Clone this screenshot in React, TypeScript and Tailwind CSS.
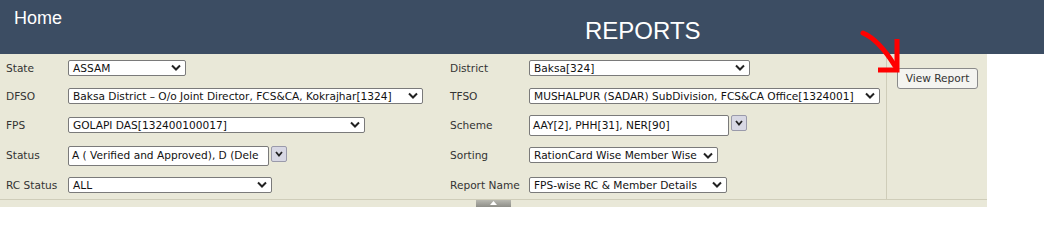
import React from 'react'

const font = { fontFamily: '"DejaVu Sans", Verdana, sans-serif' }
const arial = { fontFamily: '"Liberation Sans", Arial, sans-serif' }

function Chevron() {
    return (
        <svg width="10" height="7" viewBox="0 0 10 7" className="shrink-0">
            <path d="M1 1.5 L5 5.5 L9 1.5" fill="none" stroke="#222" strokeWidth="2" />
        </svg>
    )
}

function Select({ text, w }: { text: string; w: string }) {
    return (
        <div className={`${w} h-[16px] flex items-center justify-between bg-white border border-[#7a7a7a] rounded-[2px] pl-[4px] pr-[4px] text-[10.6px] text-[#111] leading-none overflow-hidden whitespace-nowrap`}>
            <span>{text}</span>
            <Chevron />
        </div>
    )
}

function Multi({ text, w, h }: { text: string; w: string; h: string }) {
    return (
        <div className="flex items-start gap-[2px]">
            <div className={`${w} ${h} flex items-center bg-white border border-[#7a7a7a] rounded-[2px] pl-[3px] text-[10.6px] text-[#111] leading-none overflow-hidden whitespace-nowrap`}>
                {text}
            </div>
            <div className="w-[16px] h-[16px] flex items-center justify-center bg-[#d8d8e4] border border-[#9a9aaa] rounded-[2px]">
                <svg width="8" height="6" viewBox="0 0 8 6">
                    <path d="M1 1 L4 4.5 L7 1" fill="none" stroke="#222" strokeWidth="1.8" />
                </svg>
            </div>
        </div>
    )
}

function Label({ children, w }: { children: React.ReactNode; w: string }) {
    return <div className={`${w} shrink-0 pt-[1px] text-[10.6px] text-[#333]`}>{children}</div>
}

export default function App() {
    return (
        <div className="w-[1044px] h-[252px] bg-white relative overflow-hidden" style={font}>
            <div className="h-[54px] bg-[#3c4d63] flex items-start">
                <div className="w-[585px] pl-[14px] pt-[7px] text-white text-[18px] leading-tight" style={arial}>Home</div>
                <div className="pt-[16px] text-white text-[24px] leading-tight" style={arial}>REPORTS</div>
            </div>
            <div className="w-[987px] bg-[#e9e8d8]">
                <div className="flex border-b border-[#cfcdb9]">
                    <div className="w-[886px] flex flex-col">
                        <div className="h-[28px] flex items-center">
                            <div className="w-[444px] flex items-center pl-[6px]">
                                <Label w="w-[62px]">State</Label>
                                <Select text="ASSAM" w="w-[118px]" />
                            </div>
                            <div className="flex items-center pl-[6px]">
                                <Label w="w-[79px]">District</Label>
                                <Select text="Baksa[324]" w="w-[221px]" />
                            </div>
                        </div>
                        <div className="h-[28px] flex items-center">
                            <div className="w-[444px] flex items-center pl-[6px]">
                                <Label w="w-[62px]">DFSO</Label>
                                <Select text="Baksa District – O/o Joint Director, FCS&CA, Kokrajhar[1324]" w="w-[355px]" />
                            </div>
                            <div className="flex items-center pl-[6px]">
                                <Label w="w-[79px]">TFSO</Label>
                                <Select text="MUSHALPUR (SADAR) SubDivision, FCS&CA Office[1324001]" w="w-[351px]" />
                            </div>
                        </div>
                        <div className="h-[30px] flex items-center">
                            <div className="w-[444px] flex items-center pl-[6px]">
                                <Label w="w-[62px]">FPS</Label>
                                <Select text="GOLAPI DAS[132400100017]" w="w-[297px]" />
                            </div>
                            <div className="flex items-center pl-[6px]">
                                <Label w="w-[79px]">Scheme</Label>
                                <Multi text="AAY[2], PHH[31], NER[90]" w="w-[200px]" h="h-[21px]" />
                            </div>
                        </div>
                        <div className="h-[31px] flex items-center">
                            <div className="w-[444px] flex items-center pl-[6px]">
                                <Label w="w-[62px]">Status</Label>
                                <Multi text="A ( Verified and Approved), D (Dele" w="w-[201px]" h="h-[20px]" />
                            </div>
                            <div className="flex items-center pl-[6px]">
                                <Label w="w-[79px]">Sorting</Label>
                                <Select text="RationCard Wise Member Wise" w="w-[189px]" />
                            </div>
                        </div>
                        <div className="h-[28px] flex items-center">
                            <div className="w-[444px] flex items-center pl-[6px]">
                                <Label w="w-[62px]">RC Status</Label>
                                <Select text="ALL" w="w-[204px]" />
                            </div>
                            <div className="flex items-center pl-[6px]">
                                <Label w="w-[79px]">Report Name</Label>
                                <Select text="FPS-wise RC & Member Details" w="w-[198px]" />
                            </div>
                        </div>
                    </div>
                    <div className="flex-1 border-l border-[#cfcdb9] pl-[10px] pt-[11px]">
                        <button className="w-[81px] h-[21px] rounded-[3px] border border-[#8a8a8a] bg-[#f4f4f0] text-[10.6px] text-[#333]">
                            View Report
                        </button>
                    </div>
                </div>
                <div className="h-[7px] flex justify-center">
                    <div className="w-[35px] h-[7px] bg-gradient-to-b from-[#b8b8b0] to-[#8e8e88] flex items-start justify-center pt-[1px]">
                        <svg width="7" height="4" viewBox="0 0 7 4">
                            <path d="M0 4 L3.5 0 L7 4 Z" fill="#fff" />
                        </svg>
                    </div>
                </div>
            </div>
            <svg className="absolute left-[855px] top-[25px]" width="50" height="50" viewBox="0 0 50 50">
                <path d="M8 8 C 22 14, 32 28, 40 41" fill="none" stroke="#f00" strokeWidth="5" strokeLinecap="round" />
                <path d="M42 14 L42 45 L23 45" fill="none" stroke="#f00" strokeWidth="5" strokeLinejoin="miter" />
            </svg>
        </div>
    )
}
